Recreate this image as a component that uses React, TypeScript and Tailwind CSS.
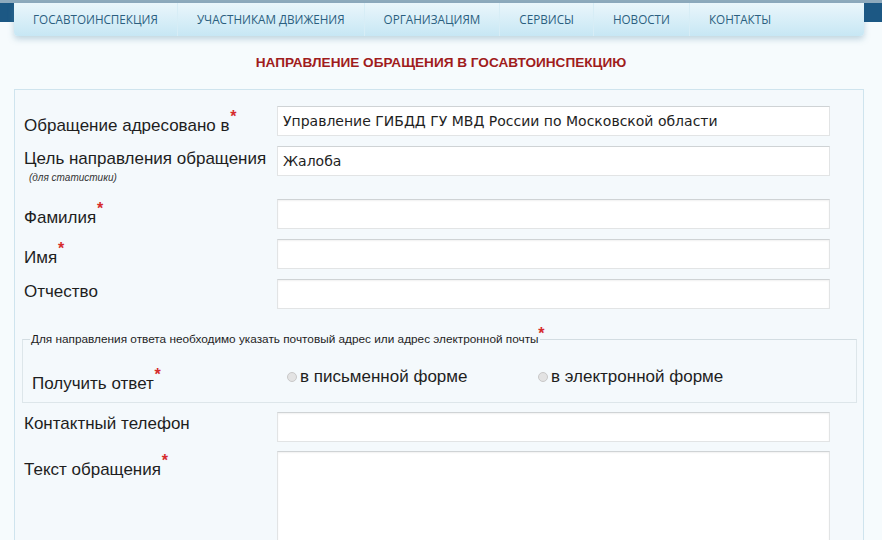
import React from 'react';

const navItems = ['ГОСАВТОИНСПЕКЦИЯ', 'УЧАСТНИКАМ ДВИЖЕНИЯ', 'ОРГАНИЗАЦИЯМ', 'СЕРВИСЫ', 'НОВОСТИ', 'КОНТАКТЫ'];

const Star = ({ className = '' }: { className?: string }) => (
  <span className={`absolute text-[#d62c2c] font-bold text-[16px] leading-none ${className}`}>*</span>
);

const Field = ({ tall = false }: { tall?: boolean }) => (
  <div
    className={`w-[553px] shrink-0 bg-white border border-[#e2e4e5] border-t-[#cfd3d5] shadow-[inset_0_1px_2px_rgba(0,0,0,0.06)] ${tall ? 'h-[100px]' : 'h-[30px]'}`}
  />
);

const App = () => {
  return (
    <div className="w-[882px] h-[540px] overflow-hidden bg-[#f6fbfd] font-['Liberation_Sans',Arial,sans-serif] text-[#1e1e1e]">
      {/* header */}
      <div className="h-[3px] bg-[#8eaabd]" />
      <div className="flex items-start">
        <div className="w-[14px] h-[19px] bg-[#1c5884]" />
        <div className="flex-1 h-[33px] flex items-center rounded-b-[4px] bg-gradient-to-b from-[#eaf6fb] to-[#c7e7f4] shadow-[0_3px_6px_rgba(90,140,170,0.35)] font-['Open_Sans',sans-serif] text-[11.7px] text-[#2b5f80]">
          {navItems.map((item, i) => (
            <div
              key={item}
              className={`px-[19px] h-full flex items-center ${i < navItems.length - 1 ? 'border-r border-[#d7edf6]' : ''}`}
            >
              {item}
            </div>
          ))}
        </div>
        <div className="w-[18px] h-[19px] bg-[#1c5884]" />
      </div>

      <h1 className="mt-[17px] h-[20px] leading-[20px] text-center text-[13.6px] font-bold text-[#a01c1c]">
        НАПРАВЛЕНИЕ ОБРАЩЕНИЯ В ГОСАВТОИНСПЕКЦИЮ
      </h1>

      <div className="ml-[14px] mt-[16px] w-[850px] h-[500px] border border-[#cfe4ee] bg-[#f4f9fc] pl-[9px] pt-[16px] text-[17px] leading-[20px]">
        <div className="flex items-start h-[30px]">
          <div className="w-[253px] pt-[10px]">
            <span className="relative">
              Обращение адресовано в<Star className="-top-[7px] -right-[7px]" />
            </span>
          </div>
          <div className="w-[553px] h-[30px] bg-white border border-[#e2e4e5] border-t-[#cfd3d5] flex items-center pl-[5px] font-['DejaVu_Sans',Verdana,sans-serif] text-[14px]">
            Управление ГИБДД ГУ МВД России по Московской области
          </div>
        </div>

        <div className="flex items-start h-[30px] mt-[10px]">
          <div className="w-[253px] pt-[3px]">
            <div>Цель направления обращения</div>
            <div className="pl-[5px] text-[10px] italic text-[#333] leading-[12px] mt-[3px]">(для статистики)</div>
          </div>
          <div className="w-[553px] h-[30px] bg-white border border-[#e2e4e5] border-t-[#cfd3d5] flex items-center pl-[5px] font-['DejaVu_Sans',Verdana,sans-serif] text-[14px]">
            Жалоба
          </div>
        </div>

        <div className="flex items-start h-[30px] mt-[23px]">
          <div className="w-[253px] pt-[9px]">
            <span className="relative">
              Фамилия<Star className="-top-[7px] -right-[7px]" />
            </span>
          </div>
          <Field />
        </div>

        <div className="flex items-start h-[30px] mt-[10px]">
          <div className="w-[253px] pt-[9px]">
            <span className="relative">
              Имя<Star className="-top-[7px] -right-[7px]" />
            </span>
          </div>
          <Field />
        </div>

        <div className="flex items-start h-[30px] mt-[10px]">
          <div className="w-[253px] pt-[3px]">Отчество</div>
          <Field />
        </div>

        <fieldset className="mt-[23px] -ml-[2px] w-[835px] h-[71px] border border-[#dde6ea] border-t-[#d3dde2] px-[9px]">
          <legend className="relative text-[11.8px] leading-[14px] px-[1px] ml-[-2px]">
            Для направления ответа необходимо указать почтовый адрес или адрес электронной почты
            <Star className="-top-[6px] -right-[5px] text-[12px]" />
          </legend>
          <div className="flex items-start mt-[21px]">
            <div className="w-[255px] pt-[7px]">
              <span className="relative">
                Получить ответ<Star className="-top-[7px] -right-[7px]" />
              </span>
            </div>
            <label className="flex items-center w-[251px]">
              <span className="w-[10px] h-[10px] rounded-full bg-[#e3e3e3] border border-[#c9c9c9] mr-[3px]" />
              в письменной форме
            </label>
            <label className="flex items-center">
              <span className="w-[10px] h-[10px] rounded-full bg-[#e3e3e3] border border-[#c9c9c9] mr-[3px]" />
              в электронной форме
            </label>
          </div>
        </fieldset>

        <div className="flex items-start h-[30px] mt-[9px]">
          <div className="w-[253px] pt-[2px]">Контактный телефон</div>
          <Field />
        </div>

        <div className="flex items-start mt-[9px]">
          <div className="w-[253px] pt-[9px]">
            <span className="relative">
              Текст обращения<Star className="-top-[7px] -right-[7px]" />
            </span>
          </div>
          <Field tall />
        </div>
      </div>
    </div>
  );
};

export default App;
